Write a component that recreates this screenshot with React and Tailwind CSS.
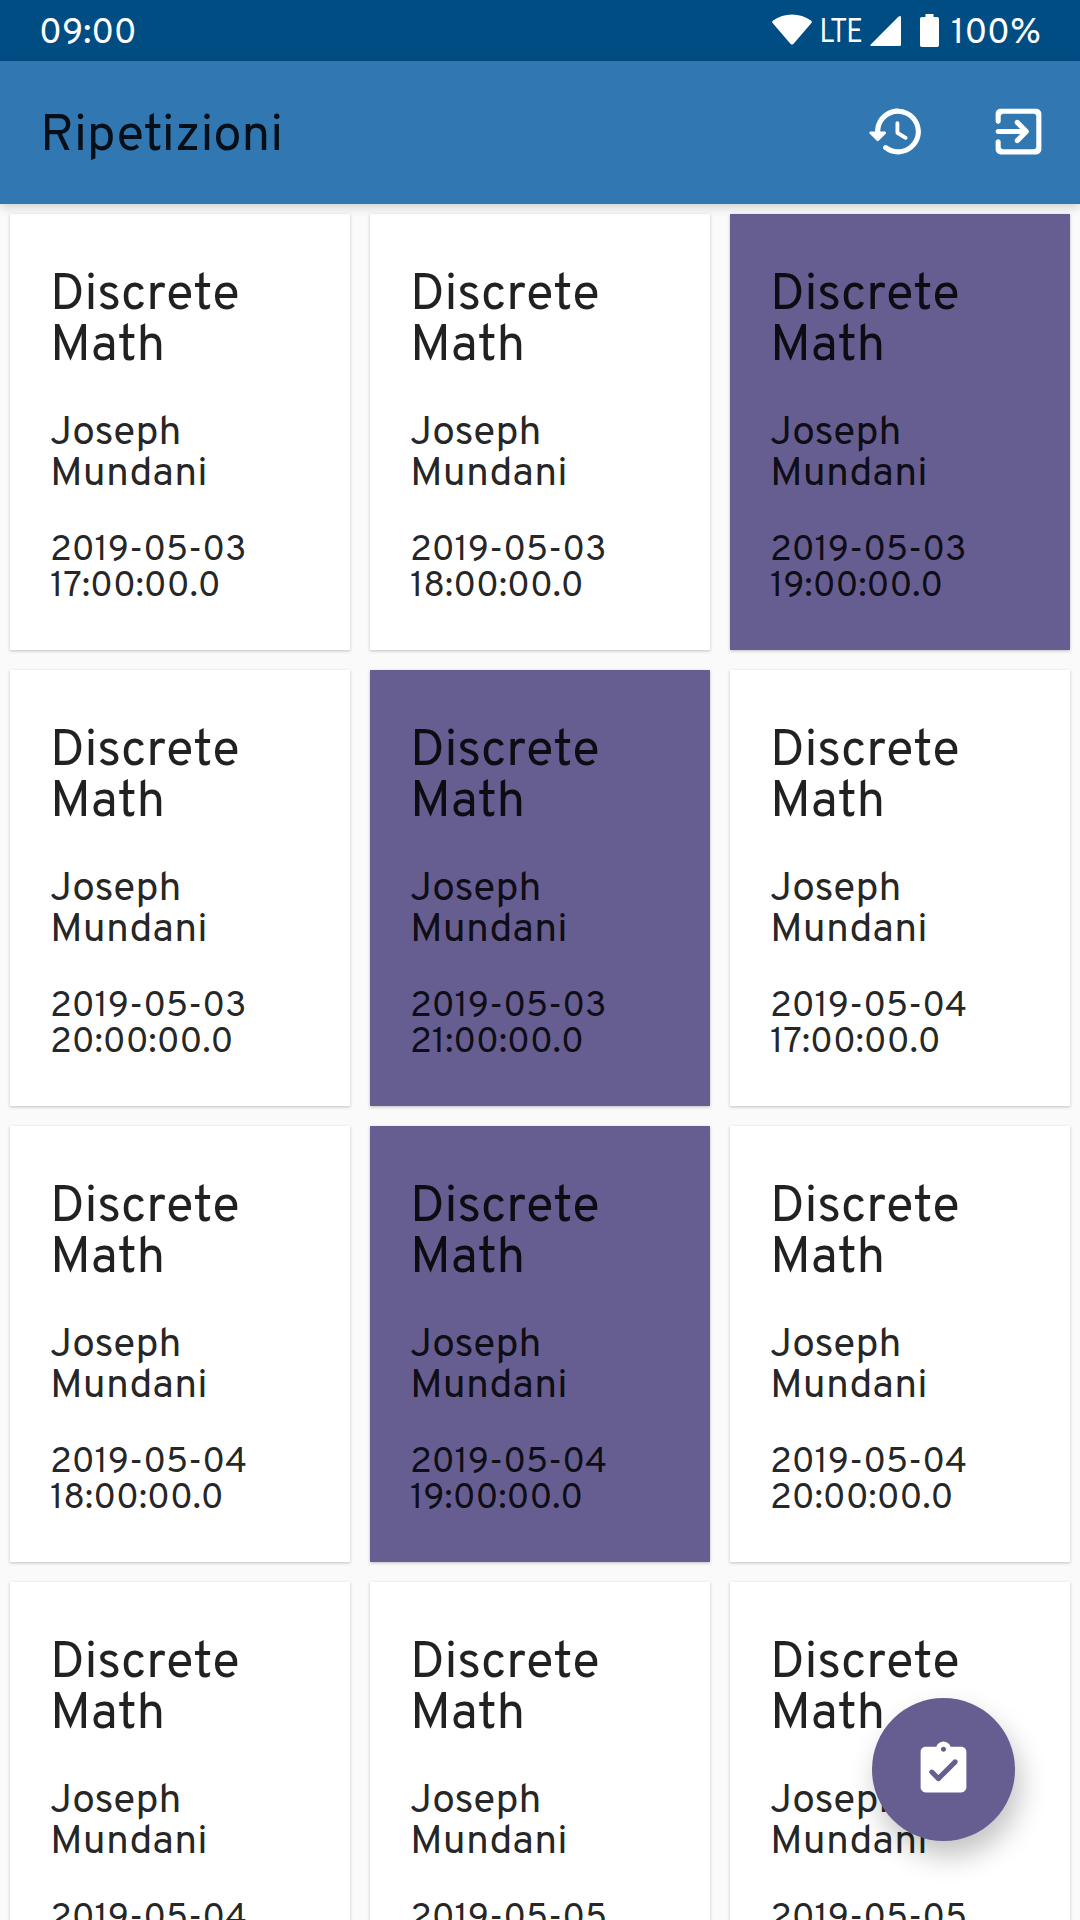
import React from 'react';

const lessons = [
  { date: '2019-05-03', time: '17:00:00.0' },
  { date: '2019-05-03', time: '18:00:00.0' },
  { date: '2019-05-03', time: '19:00:00.0', selected: true },
  { date: '2019-05-03', time: '20:00:00.0' },
  { date: '2019-05-03', time: '21:00:00.0', selected: true },
  { date: '2019-05-04', time: '17:00:00.0' },
  { date: '2019-05-04', time: '18:00:00.0' },
  { date: '2019-05-04', time: '19:00:00.0', selected: true },
  { date: '2019-05-04', time: '20:00:00.0' },
  { date: '2019-05-04', time: '21:00:00.0' },
  { date: '2019-05-05', time: '17:00:00.0' },
  { date: '2019-05-05', time: '18:00:00.0' },
];

function Icon({ d, label }) {
  return (
    <svg viewBox="0 0 24 24" className="size-[61px] fill-white" role="img" aria-label={label}>
      <path d={d} />
    </svg>
  );
}

const HISTORY =
  'M13.26 3C8.17 2.86 4 6.95 4 12H2.21c-.45 0-.67.54-.35.85l2.79 2.8c.2.2.51.2.71 0l2.79-2.8a.5.5 0 0 0-.36-.85H6c0-3.9 3.18-7.05 7.1-7 3.72.05 6.85 3.18 6.9 6.9.05 3.91-3.1 7.1-7 7.1-1.61 0-3.1-.55-4.28-1.48a.994.994 0 0 0-1.32.08c-.42.42-.39 1.13.08 1.49A8.858 8.858 0 0 0 13 21c5.05 0 9.14-4.17 9-9.26-.13-4.69-4.05-8.61-8.74-8.74zm-.51 5c-.41 0-.75.34-.75.75v3.68c0 .35.19.68.49.86l3.12 1.85c.36.21.82.09 1.03-.26.21-.36.09-.82-.26-1.03l-2.88-1.71v-3.4c0-.4-.34-.74-.75-.74z';
const EXIT =
  'M10.79 16.29c.39.39 1.02.39 1.41 0l3.59-3.59c.39-.39.39-1.02 0-1.41L12.2 7.7a.996.996 0 1 0-1.41 1.41L12.67 11H4c-.55 0-1 .45-1 1s.45 1 1 1h8.67l-1.88 1.88c-.39.39-.38 1.03 0 1.41zM19 3H5a2 2 0 0 0-2 2v3c0 .55.45 1 1 1s1-.45 1-1V6c0-.55.45-1 1-1h12c.55 0 1 .45 1 1v12c0 .55-.45 1-1 1H6c-.55 0-1-.45-1-1v-2c0-.55-.45-1-1-1s-1 .45-1 1v3c0 1.1.9 2 2 2h14c1.1 0 2-.9 2-2V5c0-1.1-.9-2-2-2z';
const TASK_DONE =
  'M19 3h-4.18C14.4 1.84 13.3 1 12 1s-2.4.84-2.82 2H5c-1.1 0-2 .9-2 2v14c0 1.1.9 2 2 2h14c1.1 0 2-.9 2-2V5c0-1.1-.9-2-2-2zm-7 0c.55 0 1 .45 1 1s-.45 1-1 1-1-.45-1-1 .45-1 1-1zm-2.71 13.29L6.7 13.7a.996.996 0 0 1 0-1.41c.39-.39 1.02-.39 1.41 0L10 14.17l5.88-5.88c.39-.39 1.02-.39 1.41 0 .39.39.39 1.02 0 1.41l-6.59 6.59c-.38.39-1.02.39-1.41 0z';

function StatusBar() {
  return (
    <div className="flex h-[61px] shrink-0 items-center justify-between bg-[#004d84] pr-[39px] pl-[39px] text-[35.7px] leading-none text-white">
      <span className="pt-[9px]">09:00</span>
      <div className="flex items-center">
        <svg viewBox="0 0 40 31" className="mb-px h-[31px] w-10 fill-white">
          <path d="M1 6.500C12-1.600 28-1.600 39 6.500c1 .8 1.100 1.600.4 2.500L21.600 29.800c-1 1.100-2.200 1.100-3.200 0L.6 9C-.1 8.100 0 7.300 1 6.500z" />
        </svg>
        <div className="ml-2 flex w-[50px] items-center pt-0.5">
          <span className="origin-left scale-x-[0.82] font-[Roboto,sans-serif] text-[32.5px] font-normal">LTE</span>
        </div>
        <svg viewBox="0 0 31 30" className="mt-0.5 h-[30px] w-[31px] fill-white">
          <path d="M31 1.500V28.500Q31 30 29.500 30H1.700Q-.500 30 1 28.300L28.400.700Q31-1 31 1.500z" />
        </svg>
        <svg viewBox="0 0 19 33" className="ml-[19px] h-[33px] w-[19px] fill-white">
          <path d="M5.500 0h8v3H17.200Q19 3 19 4.800V31.200Q19 33 17.200 33H1.800Q0 33 0 31.200V4.800Q0 3 1.800 3H5.500z" />
        </svg>
        <span className="ml-[12px] pt-[9px]">100%</span>
      </div>
    </div>
  );
}

function AppBar() {
  return (
    <header className="z-10 flex h-[143px] shrink-0 items-center justify-between bg-[#3178b3] pr-[31px] pl-10 shadow-[0_3px_10px_rgba(0,0,0,0.17)]">
      <h1 className="pt-[9px] text-[51px] leading-none text-black/87">Ripetizioni</h1>
      <div className="flex items-center gap-[62px] pb-0.5">
        <Icon d={HISTORY} label="history" />
        <Icon d={EXIT} label="exit" />
      </div>
    </header>
  );
}

function LessonCard({ date, time, selected }) {
  return (
    <article
      className={`h-[436px] px-10 pt-[56.5px] text-black/87 shadow-[0_1px_3px_rgba(0,0,0,0.24)] ${selected ? 'bg-[#665d90]' : 'bg-white'}`}
    >
      <h2 className="text-[51px] leading-[51px] tracking-[-0.2px] [font-kerning:none]">
        Discrete
        <br />
        Math
      </h2>
      <p className="mt-[41px] text-[40.8px] leading-[41px] tracking-[-0.05px]">
        Joseph
        <br />
        Mundani
      </p>
      <p className="mt-[37.5px] text-[35.7px] leading-[36px]">
        <span className="tracking-[-0.08px]">{date}</span>
        <br />
        <span className="[font-kerning:none]">{time}</span>
      </p>
    </article>
  );
}

export default function App() {
  return (
    <div className="relative flex h-[1920px] w-[1080px] flex-col overflow-hidden bg-[#fafafa] font-[Overpass,Inter,sans-serif]">
      <StatusBar />
      <AppBar />
      <main className="grid grid-cols-3 gap-5 p-2.5">
        {lessons.map((lesson) => (
          <LessonCard key={lesson.date + lesson.time} {...lesson} />
        ))}
      </main>
      <button className="absolute right-[65px] bottom-[79px] z-20 flex size-[143px] items-center justify-center rounded-full bg-[#665d90] shadow-[5px_15px_28px_rgba(0,0,0,0.24)]">
        <Icon d={TASK_DONE} label="bookings" />
      </button>
    </div>
  );
}
